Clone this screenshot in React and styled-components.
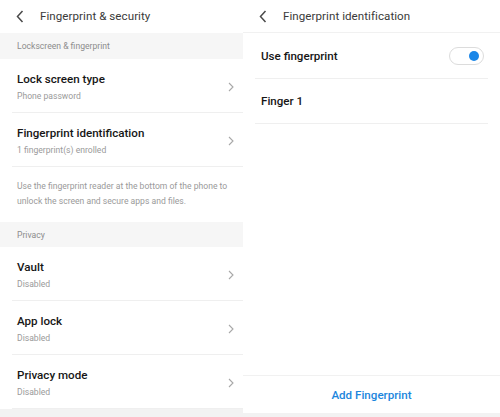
import React from 'react';
import styled, { createGlobalStyle } from 'styled-components';

const GlobalStyle = createGlobalStyle`
  html, body {
    margin: 0;
    padding: 0;
    background: #ffffff;
  }
  body {
    font-family: Roboto, "Liberation Sans", sans-serif;
    -webkit-font-smoothing: antialiased;
  }
`;

const Page = styled.div`
  display: flex;
  width: 500px;
  height: 417px;
  overflow: hidden;
`;

const Panel = styled.div`
  display: flex;
  flex-direction: column;
  width: ${p => p.width}px;
  flex: ${p => (p.width ? 'none' : '1')};
  background: #ffffff;
`;

const Header = styled.div`
  display: flex;
  align-items: center;
  height: 33px;
  flex: none;
  padding-left: ${p => p.pad}px;
  box-sizing: border-box;
  border-bottom: 1px solid ${p => (p.line ? '#f1f1f1' : 'transparent')};
`;

const HeaderTitle = styled.div`
  margin-left: ${p => p.gap}px;
  font-size: 11.6px;
  color: #3a3a3a;
  letter-spacing: 0.05px;
`;

const SectionLabel = styled.div`
  display: flex;
  align-items: center;
  height: ${p => p.h}px;
  flex: none;
  padding-left: 17px;
  background: #f6f6f6;
  font-size: 8.6px;
  color: #8c8c8c;
`;

const Row = styled.div`
  display: flex;
  align-items: center;
  justify-content: space-between;
  height: 54px;
  flex: none;
  box-sizing: border-box;
  margin-left: 12px;
  padding: 0 9px 0 5px;
  border-bottom: 1px solid #efefef;
`;

const RowText = styled.div`
  display: flex;
  flex-direction: column;
  gap: 5px;
  margin-top: 2px;
`;

const Title = styled.div`
  font-size: 11.6px;
  font-weight: 500;
  color: #161616;
`;

const Sub = styled.div`
  font-size: 8.6px;
  color: #9a9a9a;
`;

const Chev = styled.svg`
  margin-top: 2px;
`;

const Note = styled.div`
  height: 55px;
  flex: none;
  box-sizing: border-box;
  padding: 12px 14px 0 17px;
  font-size: 8.6px;
  line-height: 14.5px;
  color: #9a9a9a;
`;

const BottomStrip = styled.div`
  flex: none;
  height: ${p => p.h}px;
  background: #f2f2f2;
`;

const DetailRow = styled.div`
  display: flex;
  align-items: center;
  justify-content: space-between;
  height: ${p => p.h}px;
  flex: none;
  box-sizing: border-box;
  margin: 0 12px;
  padding: 0 4px 0 6px;
  border-bottom: 1px solid #efefef;
`;

const Spacer = styled.div`
  flex: 1;
`;

const Footer = styled.div`
  display: flex;
  align-items: center;
  justify-content: center;
  height: 37px;
  flex: none;
  border-top: 1px solid #f1f1f1;
  font-size: 11.6px;
  font-weight: 500;
  color: #1c86dd;
`;

const Track = styled.div`
  position: relative;
  width: 35px;
  height: 18px;
  box-sizing: border-box;
  border: 1px solid #dcdcdc;
  border-radius: 9px;
  background: #ffffff;
`;

const Knob = styled.div`
  position: absolute;
  top: 3px;
  right: 4px;
  width: 10px;
  height: 10px;
  border-radius: 50%;
  background: #1a86e8;
`;

const Back = () => (
  <svg width="8" height="13" viewBox="0 0 8 13">
    <polyline points="6.5,1 1.5,6.5 6.5,12" fill="none" stroke="#4a4a4a" strokeWidth="1.5" />
  </svg>
);

const Chevron = () => (
  <Chev width="6" height="10" viewBox="0 0 6 10">
    <polyline points="1,1 5,5 1,9" fill="none" stroke="#a8a8a8" strokeWidth="1.1" />
  </Chev>
);

const SettingRow = ({ title, sub }) => (
  <Row>
    <RowText>
      <Title>{title}</Title>
      <Sub>{sub}</Sub>
    </RowText>
    <Chevron />
  </Row>
);

export default function App() {
  return (
    <Page>
      <GlobalStyle />
      <Panel width={243}>
        <Header pad={16}>
          <Back />
          <HeaderTitle gap={16}>Fingerprint &amp; security</HeaderTitle>
        </Header>
        <SectionLabel h={26}>Lockscreen &amp; fingerprint</SectionLabel>
        <SettingRow title="Lock screen type" sub="Phone password" />
        <SettingRow title="Fingerprint identification" sub="1 fingerprint(s) enrolled" />
        <Note>
          Use the fingerprint reader at the bottom of the phone to unlock the screen and secure apps and files.
        </Note>
        <SectionLabel h={25}>Privacy</SectionLabel>
        <SettingRow title="Vault" sub="Disabled" />
        <SettingRow title="App lock" sub="Disabled" />
        <SettingRow title="Privacy mode" sub="Disabled" />
        <BottomStrip h={8} />
      </Panel>
      <Panel>
        <Header pad={16} line>
          <Back />
          <HeaderTitle gap={16}>Fingerprint identification</HeaderTitle>
        </Header>
        <DetailRow h={46}>
          <Title>Use fingerprint</Title>
          <Track>
            <Knob />
          </Track>
        </DetailRow>
        <DetailRow h={45}>
          <Title>Finger 1</Title>
        </DetailRow>
        <Spacer />
        <Footer>Add Fingerprint</Footer>
        <BottomStrip h={4} />
      </Panel>
    </Page>
  );
}
